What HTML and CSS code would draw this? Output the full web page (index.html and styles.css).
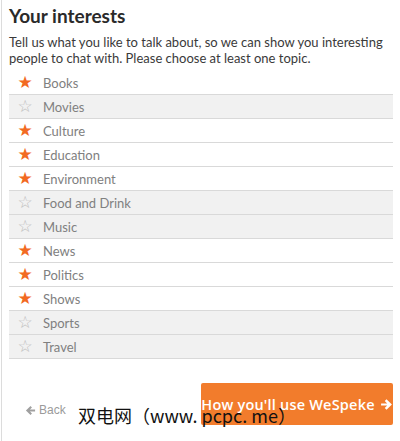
FILE: index.html
```html
<!DOCTYPE html>
<html>
<head>
<meta charset="utf-8">
<link rel="stylesheet" href="styles.css">
</head>
<body>
<div class="page">
  <h1 class="title">Your interests</h1>
  <p class="intro">Tell us what you like to talk about, so we can show you interesting people to chat with. Please choose at least one topic.</p>
  <ul class="topics">
    <li class="topic on"><span class="star">★</span><span class="label">Books</span></li>
    <li class="topic"><span class="star">☆</span><span class="label">Movies</span></li>
    <li class="topic on"><span class="star">★</span><span class="label">Culture</span></li>
    <li class="topic on"><span class="star">★</span><span class="label">Education</span></li>
    <li class="topic on"><span class="star">★</span><span class="label">Environment</span></li>
    <li class="topic"><span class="star">☆</span><span class="label">Food and Drink</span></li>
    <li class="topic"><span class="star">☆</span><span class="label">Music</span></li>
    <li class="topic on"><span class="star">★</span><span class="label">News</span></li>
    <li class="topic on"><span class="star">★</span><span class="label">Politics</span></li>
    <li class="topic on"><span class="star">★</span><span class="label">Shows</span></li>
    <li class="topic"><span class="star">☆</span><span class="label">Sports</span></li>
    <li class="topic"><span class="star">☆</span><span class="label">Travel</span></li>
  </ul>
  <div class="footer">
    <a class="back"><svg class="back-ico" viewBox="0 0 12 12" width="11" height="11"><path d="M1 6 L6 1.2 L7.6 2.8 L5.4 5 H11 V7 H5.4 L7.6 9.2 L6 10.8 Z" fill="#a0a0a0"/></svg>Back</a>
    <button class="next">How you'll use WeSpeke <svg class="next-ico" viewBox="0 0 12 12" width="13" height="13"><path d="M11 6 L6 1.2 L4.4 2.8 L6.6 5 H1 V7 H6.6 L4.4 9.2 L6 10.8 Z" fill="#fff"/></svg></button>
    <span class="watermark">双电网（www. pcpc. me）</span>
  </div>
</div>
</body>
</html>
```
FILE: styles.css
```css
html, body { margin: 0; padding: 0; background: #fff; }
body { padding-left: 1px; }
.page {
  border-left: 1px solid #dcdcdc;
  min-height: 441px;
  box-sizing: border-box;
  padding: 4px 7px 0 7px;
  font-family: "Lato", "Open Sans", sans-serif;
  color: #333;
}
.title {
  margin: 0;
  font-size: 19px;
  font-weight: 700;
  line-height: 24px;
  color: #2a2a2a;
}
.intro {
  margin: 6px 0 0 0;
  font-size: 13px;
  line-height: 16px;
  color: #3a3a3a;
}
.topics {
  list-style: none;
  margin: 5px 0 0 0;
  padding: 0;
}
.topic {
  display: flex;
  align-items: center;
  height: 23px;
  border-bottom: 1px solid #d9d9d9;
  background: #f1f1f1;
}
.topic.on { background: #fff; }
.star {
  width: 16px;
  margin-left: 8px;
  font-size: 17px;
  line-height: 1;
  color: #bdbdbd;
  text-align: center;
  font-family: "DejaVu Sans", sans-serif;
}
.topic.on .star { color: #f26a22; }
.label {
  margin-left: 10px;
  font-size: 13px;
  color: #808080;
}
.footer {
  position: relative;
  display: flex;
  align-items: center;
  justify-content: space-between;
  margin-top: 24px;
}
.back {
  display: flex;
  align-items: center;
  gap: 3px;
  margin-left: 16px;
  margin-top: 12px;
  font-family: "Liberation Sans", sans-serif;
  font-size: 12px;
  color: #9a9a9a;
}
.next {
  width: 192px;
  height: 42px;
  border: none;
  border-radius: 2px;
  background: #f27c2c;
  color: #fff;
  font-family: "Open Sans", sans-serif;
  font-weight: 600;
  font-size: 14.5px;
  letter-spacing: 0.2px;
  display: flex;
  align-items: center;
  justify-content: center;
  gap: 5px;
  padding: 0;
}
.watermark {
  position: absolute;
  left: 69px;
  top: 22px;
  font-family: "Noto Sans CJK SC", sans-serif;
  font-size: 18px;
  color: #111;
  white-space: nowrap;
  line-height: 20px;
}
```
